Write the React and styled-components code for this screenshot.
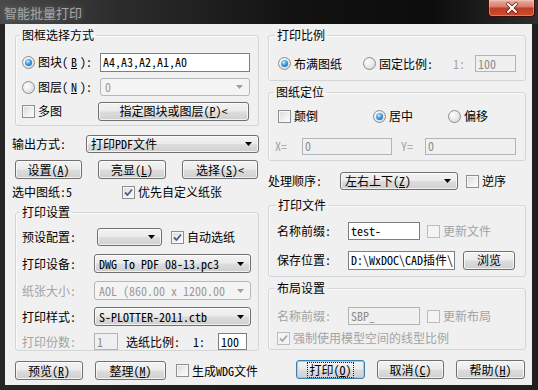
import React from "react";
import styled, { createGlobalStyle, css } from "styled-components";

const GlobalStyle = createGlobalStyle`
  html, body {
    margin: 0;
    padding: 0;
    background: #111;
  }
  body {
    font-family: "Noto Sans CJK SC", sans-serif;
    font-size: 12px;
    line-height: 14px;
    color: #000;
    font-feature-settings: "hwid";
  }
`;

const Window = styled.div`
  width: 538px;
  height: 390px;
  display: flex;
  flex-direction: column;
  background: linear-gradient(90deg, #262626, #1b1b1b 50%, #202020);
`;

const TitleBar = styled.div`
  height: 24px;
  flex: none;
  display: flex;
  justify-content: space-between;
  align-items: flex-start;
  background: linear-gradient(90deg, #4a4a4a 0%, #2c2c2c 22%, #121212 55%, #0c0c0c 80%, #2e2e2e 100%);
`;

const Title = styled.div`
  padding: 5px 0 0 4px;
  font-size: 13px;
  line-height: 15px;
  color: #a8a8a8;
  text-shadow: 0 0 6px rgba(160, 160, 160, 0.55);
  font-feature-settings: normal;
`;

const CloseButton = styled.div`
  width: 47px;
  height: 17px;
  margin-right: 3px;
  box-sizing: border-box;
  border: 1px solid #3b0e08;
  border-top: none;
  border-radius: 0 0 4px 4px;
  display: flex;
  align-items: center;
  justify-content: center;
  background: linear-gradient(#eab0a2 0%, #d9806c 40%, #c23d25 52%, #cf4b2e 100%);
  box-shadow: inset 0 0 0 1px rgba(255, 220, 210, 0.35);
`;

const Client = styled.div`
  flex: 1;
  margin: 0 6px 5px 5px;
  background: #f0f0f0;
  display: grid;
  grid-template-columns: 247px 258px;
  column-gap: 9px;
  padding-left: 7px;
`;

const Column = styled.div`
  display: flex;
  flex-direction: column;
`;

const Group = styled.fieldset`
  margin: ${(p) => p.$mt}px 0 0 ${(p) => p.$ml || 0}px;
  padding: 0;
  width: ${(p) => p.$w}px;
  box-sizing: border-box;
  min-width: 0;
  border: 1px solid #d3d6d9;
  border-radius: 3px;
  box-shadow: inset 1px 1px 0 #fbfbfb;
`;

const Legend = styled.legend`
  margin-left: ${(p) => p.$ml}px;
  padding: 0 2px;
  line-height: 14px;
`;

const GroupBody = styled.div`
  display: flex;
  flex-direction: column;
  padding: 0 0 ${(p) => p.$pb}px ${(p) => p.$pl}px;
`;

const Row = styled.div`
  display: flex;
  align-items: center;
  height: ${(p) => p.$h}px;
  margin-top: ${(p) => p.$mt}px;
  padding-left: ${(p) => p.$pl || 0}px;
  white-space: nowrap;
`;

const Text = styled.span`
  flex: none;
  width: ${(p) => (p.$w ? `${p.$w}px` : "auto")};
  margin-left: ${(p) => p.$ml || 0}px;
  color: ${(p) => (p.$disabled ? "#a3a3a3" : "#000")};
`;

const Choice = styled.span`
  flex: none;
  display: inline-flex;
  align-items: center;
  gap: 3px;
  width: ${(p) => (p.$w ? `${p.$w}px` : "auto")};
  margin-left: ${(p) => p.$ml || 0}px;
  color: ${(p) => (p.$disabled ? "#a3a3a3" : "#000")};
`;

const RadioMark = styled.span`
  flex: none;
  position: relative;
  width: 11px;
  height: 11px;
  border-radius: 50%;
  border: 1px solid #8b8e90;
  background: radial-gradient(circle at 35% 35%, #ffffff 0%, #e6e6e6 55%, #cdcdcd 100%);
  ${(p) =>
    p.$on &&
    css`
      &::after {
        content: "";
        position: absolute;
        left: 2px;
        top: 2px;
        width: 7px;
        height: 7px;
        border-radius: 50%;
        background: radial-gradient(circle at 40% 35%, #c9eeff 0%, #3d9ce6 45%, #13497f 100%);
      }
    `}
`;

const CheckMark = styled.span`
  flex: none;
  width: 13px;
  height: 13px;
  box-sizing: border-box;
  border: 1px solid ${(p) => (p.$disabled ? "#bcbcbc" : "#8e8f8f")};
  background: ${(p) =>
    p.$disabled ? "#f4f4f4" : "linear-gradient(135deg, #d9d9d9 0%, #f1f1f1 60%, #ffffff 100%)"};
  box-shadow: inset 0 0 0 1px ${(p) => (p.$disabled ? "#f4f4f4" : "#f7f7f7")};
  display: flex;
  align-items: center;
  justify-content: center;
`;

const TextBox = styled.div`
  flex: none;
  box-sizing: border-box;
  width: ${(p) => p.$w}px;
  height: ${(p) => p.$h || 18}px;
  margin-left: ${(p) => p.$ml || 0}px;
  padding: 0 2px;
  display: flex;
  align-items: center;
  white-space: nowrap;
  border: 1px solid ${(p) => (p.$disabled ? "#b2b5b8" : "#7b7e83")};
  background: ${(p) => (p.$disabled ? "#f0f0f0" : "#fff")};
  color: ${(p) => (p.$disabled ? "#8c8c8c" : "#000")};
`;

const buttonFace = css`
  border: 1px solid #707070;
  border-radius: 3px;
  background: linear-gradient(#f3f3f3 0%, #ebebeb 48%, #dddddd 52%, #cfcfcf 100%);
  box-shadow: inset 0 0 0 1px rgba(255, 255, 255, 0.7);
`;

const Combo = styled.div`
  flex: none;
  box-sizing: border-box;
  width: ${(p) => p.$w}px;
  height: ${(p) => p.$h || 18}px;
  margin-left: ${(p) => p.$ml || 0}px;
  padding: 0 6px 0 4px;
  display: flex;
  align-items: center;
  gap: 4px;
  ${(p) =>
    p.$disabled
      ? css`
          border: 1px solid #b5b8bb;
          border-radius: 3px;
          background: #f4f4f4;
          color: #9a9a9a;
        `
      : buttonFace}
`;

const ComboText = styled.span`
  flex: 1;
  white-space: nowrap;
`;

const Button = styled.div`
  flex: none;
  box-sizing: border-box;
  width: ${(p) => p.$w}px;
  height: 19px;
  margin-left: ${(p) => p.$ml || 0}px;
  display: flex;
  align-items: center;
  justify-content: center;
  ${buttonFace}
  ${(p) =>
    p.$default &&
    css`
      border-color: #3c7fb1;
      box-shadow: inset 0 0 0 1px #8fd3f4;
    `}
`;

const FocusRect = styled.span`
  outline: 1px dotted #222;
  outline-offset: 0;
  padding: 0 1px;
`;

const Arrow = ({ disabled }) => (
  <svg width="7" height="4" viewBox="0 0 7 4">
    <path d="M0 0 H7 L3.5 4 Z" fill={disabled ? "#a0a0a0" : "#000"} />
  </svg>
);

const Radio = ({ on, children, ...rest }) => (
  <Choice {...rest}>
    <RadioMark $on={on} />
    {children}
  </Choice>
);

const Check = ({ on, disabled, children, ...rest }) => (
  <Choice $disabled={disabled} {...rest}>
    <CheckMark $disabled={disabled}>
      {on && (
        <svg width="9" height="9" viewBox="0 0 9 9">
          <path
            d="M1 4.5 L3.5 7 L8 1.5"
            fill="none"
            stroke={disabled ? "#a8a8a8" : "#4a5d8e"}
            strokeWidth="1.8"
          />
        </svg>
      )}
    </CheckMark>
    {children}
  </Choice>
);

const Key = ({ k }) => (
  <>
    (<u>{k}</u>)
  </>
);

export default function App() {
  return (
    <>
      <GlobalStyle />
      <Window>
        <TitleBar>
          <Title>智能批量打印</Title>
          <CloseButton>
            <svg width="14" height="12" viewBox="0 0 14 12">
              <path d="M3 2 L11 10 M11 2 L3 10" stroke="#5a1a10" strokeWidth="3.4" strokeLinecap="round" />
              <path d="M3 2 L11 10 M11 2 L3 10" stroke="#fff" strokeWidth="2" strokeLinecap="round" />
            </svg>
          </CloseButton>
        </TitleBar>
        <Client>
          <Column>
            <Group $mt={4} $ml={3} $w={244}>
              <Legend $ml={4}>图框选择方式</Legend>
              <GroupBody $pl={6} $pb={4}>
                <Row $mt={10} $h={20}>
                  <Radio on $w={78}>
                    图块<Key k="B" />:
                  </Radio>
                  <TextBox $w={150} $h={19}>A4,A3,A2,A1,A0</TextBox>
                </Row>
                <Row $mt={5} $h={20}>
                  <Radio $w={78}>
                    图层<Key k="N" />:
                  </Radio>
                  <Combo $w={150} $disabled>
                    <ComboText>0</ComboText>
                    <Arrow disabled />
                  </Combo>
                </Row>
                <Row $mt={4} $h={20}>
                  <Check $w={76}>多图</Check>
                  <Button $w={151}>
                    指定图块或图层<Key k="P" />&lt;
                  </Button>
                </Row>
              </GroupBody>
            </Group>

            <Row $mt={9} $h={18}>
              <Text $w={74}>输出方式:</Text>
              <Combo $w={173}>
                <ComboText>打印PDF文件</ComboText>
                <Arrow />
              </Combo>
            </Row>
            <Row $mt={7} $h={19} $pl={3}>
              <Button $w={67}>
                设置<Key k="A" />
              </Button>
              <Button $w={68} $ml={16}>
                亮显<Key k="L" />
              </Button>
              <Button $w={76} $ml={16}>
                选择<Key k="S" />&lt;
              </Button>
            </Row>
            <Row $mt={6} $h={14}>
              <Text $w={110}>选中图纸:5</Text>
              <Check on>优先自定义纸张</Check>
            </Row>

            <Group $mt={6} $ml={3} $w={244}>
              <Legend $ml={4}>打印设置</Legend>
              <GroupBody $pl={6} $pb={0}>
                <Row $mt={9} $h={18}>
                  <Text $w={75}>预设配置:</Text>
                  <Combo $w={65}>
                    <ComboText />
                    <Arrow />
                  </Combo>
                  <Check on $ml={9}>
                    自动选纸
                  </Check>
                </Row>
                <Row $mt={8} $h={19}>
                  <Text $w={72}>打印设备:</Text>
                  <Combo $w={157} $h={19}>
                    <ComboText>DWG To PDF 08-13.pc3</ComboText>
                    <Arrow />
                  </Combo>
                </Row>
                <Row $mt={8} $h={19}>
                  <Text $w={72} $disabled>
                    纸张大小:
                  </Text>
                  <Combo $w={157} $h={19} $disabled>
                    <ComboText>AOL (860.00 x 1200.00</ComboText>
                    <Arrow disabled />
                  </Combo>
                </Row>
                <Row $mt={7} $h={19}>
                  <Text $w={72}>打印样式:</Text>
                  <Combo $w={157} $h={19}>
                    <ComboText>S-PLOTTER-2011.ctb</ComboText>
                    <Arrow />
                  </Combo>
                </Row>
                <Row $mt={7} $h={17}>
                  <Text $w={72} $disabled>
                    打印份数:
                  </Text>
                  <TextBox $w={24} $h={17} $disabled>
                    1
                  </TextBox>
                  <Text $w={67} $ml={8}>
                    选纸比例:
                  </Text>
                  <Text $w={25}>1:</Text>
                  <TextBox $w={29} $h={17}>
                    100
                  </TextBox>
                </Row>
              </GroupBody>
            </Group>

            <Row $mt={10} $h={19} $pl={3}>
              <Button $w={68}>
                预览<Key k="R" />
              </Button>
              <Button $w={71} $ml={12}>
                整理<Key k="M" />
              </Button>
              <Check $ml={10}>生成WDG文件</Check>
            </Row>
          </Column>

          <Column>
            <Group $mt={4} $w={258}>
              <Legend $ml={6}>打印比例</Legend>
              <GroupBody $pl={9} $pb={7}>
                <Row $mt={12} $h={19}>
                  <Radio on $w={85}>
                    布满图纸
                  </Radio>
                  <Radio $w={90}>固定比例:</Radio>
                  <Text $w={22} $disabled>
                    1:
                  </Text>
                  <TextBox $w={41} $h={17} $disabled>
                    100
                  </TextBox>
                </Row>
              </GroupBody>
            </Group>

            <Group $mt={4} $w={258}>
              <Legend $ml={5}>图纸定位</Legend>
              <GroupBody $pl={6} $pb={5}>
                <Row $mt={9} $h={16} $pl={3}>
                  <Check $w={95}>颠倒</Check>
                  <Radio on $w={75}>
                    居中
                  </Radio>
                  <Radio>偏移</Radio>
                </Row>
                <Row $mt={13} $h={18}>
                  <Text $w={27} $disabled>
                    X=
                  </Text>
                  <TextBox $w={90} $h={17} $disabled>
                    0
                  </TextBox>
                  <Text $w={24} $ml={9} $disabled>
                    Y=
                  </Text>
                  <TextBox $w={91} $h={17} $disabled>
                    0
                  </TextBox>
                </Row>
              </GroupBody>
            </Group>

            <Row $mt={11} $h={18}>
              <Text $w={72}>处理顺序:</Text>
              <Combo $w={118}>
                <ComboText>
                  左右上下<Key k="Z" />
                </ComboText>
                <Arrow />
              </Combo>
              <Check $ml={8}>逆序</Check>
            </Row>

            <Group $mt={8} $w={258}>
              <Legend $ml={7}>打印文件</Legend>
              <GroupBody $pl={8} $pb={6}>
                <Row $mt={10} $h={18}>
                  <Text $w={71}>名称前缀:</Text>
                  <TextBox $w={72}>test-</TextBox>
                  <Check $ml={7} disabled>
                    更新文件
                  </Check>
                </Row>
                <Row $mt={10} $h={20}>
                  <Text $w={71}>保存位置:</Text>
                  <TextBox $w={107} $h={19}>
                    {"D:\\WxDOC\\CAD插件\\"}
                  </TextBox>
                  <Button $w={52} $ml={8}>
                    浏览
                  </Button>
                </Row>
              </GroupBody>
            </Group>

            <Group $mt={4} $w={258}>
              <Legend $ml={6}>布局设置</Legend>
              <GroupBody $pl={8} $pb={3}>
                <Row $mt={12} $h={18}>
                  <Text $w={71} $disabled>
                    名称前缀:
                  </Text>
                  <TextBox $w={72} $disabled>
                    SBP_
                  </TextBox>
                  <Check $ml={7} disabled>
                    更新布局
                  </Check>
                </Row>
                <Row $mt={5} $h={16}>
                  <Check on disabled>
                    强制使用模型空间的线型比例
                  </Check>
                </Row>
              </GroupBody>
            </Group>

            <Row $mt={10} $h={19} $pl={28}>
              <Button $w={69} $default>
                <FocusRect>
                  打印<Key k="O" />
                </FocusRect>
              </Button>
              <Button $w={67} $ml={12}>
                取消<Key k="C" />
              </Button>
              <Button $w={69} $ml={12}>
                帮助<Key k="H" />
              </Button>
            </Row>
          </Column>
        </Client>
      </Window>
    </>
  );
}
